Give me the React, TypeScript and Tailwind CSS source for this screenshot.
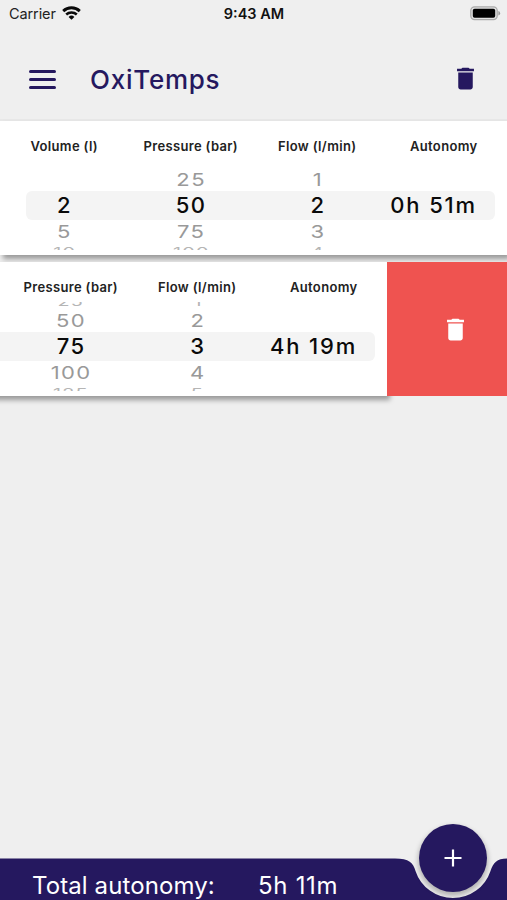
import { MdDelete } from "react-icons/md";

type Cylinder = {
  // five rows per wheel, the middle one is the selected value
  volume: string[];
  pressure: string[];
  flow: string[];
  autonomy: string;
};

const cylinders: Cylinder[] = [
  {
    volume: ["", "", "2", "5", "10"],
    pressure: ["", "25", "50", "75", "100"],
    flow: ["", "1", "2", "3", "4"],
    autonomy: "0h 51m",
  },
  {
    volume: ["2", "5", "10", "15", "20"],
    pressure: ["25", "50", "75", "100", "125"],
    flow: ["1", "2", "3", "4", "5"],
    autonomy: "4h 19m",
  },
];

function StatusBar() {
  return (
    <div className="grid h-7 grid-cols-3 items-center pr-[6px] pl-[9px] text-[14.5px] leading-7 text-[#222]">
      <div className="flex items-center gap-[6px]">
        <span className="tracking-[-0.1px]">Carrier</span>
        <svg width="19" height="15" viewBox="0 0 19 15" fill="none" stroke="#0a0a0a" className="-mt-px">
          <path d="M1.2 5.1a12 12 0 0 1 16.6 0" strokeWidth="2.9" />
          <path d="M4.2 8.5a7.7 7.7 0 0 1 10.6 0" strokeWidth="2.5" />
          <path d="M9.5 13.8 6.6 10.9a4.2 4.2 0 0 1 5.8 0Z" fill="#0a0a0a" stroke="none" />
        </svg>
      </div>
      <span className="-ml-[2px] text-center text-[14.5px] font-semibold whitespace-nowrap text-[#111]">9:43 AM</span>
      <svg width="31" height="15" viewBox="0 0 31 15" className="-mt-[2px] justify-self-end">
        <rect x=".8" y=".8" width="26.4" height="12.8" rx="3.8" fill="#e2e2e2" stroke="#aaa" strokeWidth="1.3" />
        <rect x="2.8" y="2.7" width="22.4" height="9" rx="1.8" fill="#000" />
        <path d="M28.4 5a2.4 2.4 0 0 1 0 4.6Z" fill="#999" />
      </svg>
    </div>
  );
}

function AppBar() {
  return (
    <header className="flex h-[93px] items-center border-b-2 border-[#e8e8e8] pt-[12px] pr-[27px] pb-px pl-[29px] text-[#25185f]">
      <button className="flex w-[27px] flex-col gap-[5px]" aria-label="Menu">
        <span className="h-[3px] rounded-full bg-current" />
        <span className="h-[3px] rounded-full bg-current" />
        <span className="h-[3px] rounded-full bg-current" />
      </button>
      <h1 className="ml-[34px] flex-1 text-[26px] font-medium tracking-[0.75px]">OxiTemps</h1>
      <button aria-label="Delete all" className="-mt-px">
        <MdDelete size={29} />
      </button>
    </header>
  );
}

const rowStyles = [
  "h-[17px] scale-x-90 scale-y-[0.55] leading-[17px] text-[#b5b5b5]",
  "h-[22px] scale-y-[0.8] text-[#999]",
  "h-[30px] font-medium text-[#0a0a0a]",
  "h-[22px] scale-y-[0.8] text-[#999]",
  "h-[17px] scale-x-90 scale-y-[0.55] leading-[17px] text-[#b5b5b5]",
];

function Wheel({ values }: { values: string[] }) {
  return (
    <div className="flex h-[89px] flex-col items-center justify-center overflow-hidden text-[22px] tracking-[1.4px]">
      {values.map((value, i) => (
        <div key={i} className={`flex shrink-0 items-center pl-[2px] ${rowStyles[i]}`}>
          {value}
        </div>
      ))}
    </div>
  );
}

function CylinderCard({ cylinder }: { cylinder: Cylinder }) {
  return (
    <div className="relative h-[134px] w-[507px] shrink-0 bg-white pt-[15px] shadow-[3px_4px_5px_rgba(0,0,0,0.36)]">
      <div className="grid grid-cols-4 pl-px text-center text-[13px] leading-[21px] font-semibold tracking-[0.35px] text-[#222]">
        <span>Volume (l)</span>
        <span>Pressure (bar)</span>
        <span>Flow (l/min)</span>
        <span>Autonomy</span>
      </div>
      <div className="relative mt-[4px]">
        <div className="absolute top-[30px] right-[12px] left-[26px] h-[29px] rounded-md bg-[#f4f4f4]" />
        <div className="relative grid grid-cols-4">
          <Wheel values={cylinder.volume} />
          <Wheel values={cylinder.pressure} />
          <Wheel values={cylinder.flow} />
          <div className="flex h-[89px] items-center justify-center pr-[20px] text-[22px] font-medium tracking-[1.85px] whitespace-nowrap text-[#0a0a0a]">
            {cylinder.autonomy}
          </div>
        </div>
      </div>
    </div>
  );
}

function BottomBar() {
  return (
    <footer className="relative h-[42px] shrink-0 text-white">
      <svg className="absolute top-0 left-0" width="507" height="42" viewBox="0 0 507 42">
        <path
          d="M0 .5H395C409 .5 413.500 5 415.500 13A39.500 39.500 0 0 0 490.500 13C493 5 497 .5 507 .5V42H0Z"
          fill="#25185f"
        />
      </svg>
      <div className="relative flex pt-[12px] pl-[32px] text-[24px] leading-8 whitespace-nowrap">
        <span className="w-[226px] tracking-[0.1px]">Total autonomy:</span>
        <span className="tracking-[0.7px]">5h 11m</span>
      </div>
      <button
        className="absolute top-[-34px] left-[419px] flex size-[68px] items-center justify-center rounded-full bg-[#25185f] shadow-[0_3px_5px_1px_rgba(0,0,0,0.26)]"
        aria-label="Add"
      >
        <svg width="18" height="18" viewBox="0 0 18 18" stroke="white" strokeWidth="2.2">
          <path d="M9 .5v17M.5 9h17" />
        </svg>
      </button>
    </footer>
  );
}

export default function App() {
  return (
    <div className="flex h-[900px] w-[507px] flex-col overflow-hidden bg-[#efefef] font-['Inter',sans-serif]">
      <StatusBar />
      <AppBar />
      <main className="flex flex-1 flex-col gap-[7px]">
        <CylinderCard cylinder={cylinders[0]} />
        <div className="relative flex">
          <div className="-ml-[120px]">
            <CylinderCard cylinder={cylinders[1]} />
          </div>
          <button
            className="relative flex w-[120px] items-center justify-center bg-[#ef5350] pl-[17px] text-white"
            aria-label="Delete"
          >
            <MdDelete size={29} />
          </button>
        </div>
      </main>
      <BottomBar />
    </div>
  );
}
